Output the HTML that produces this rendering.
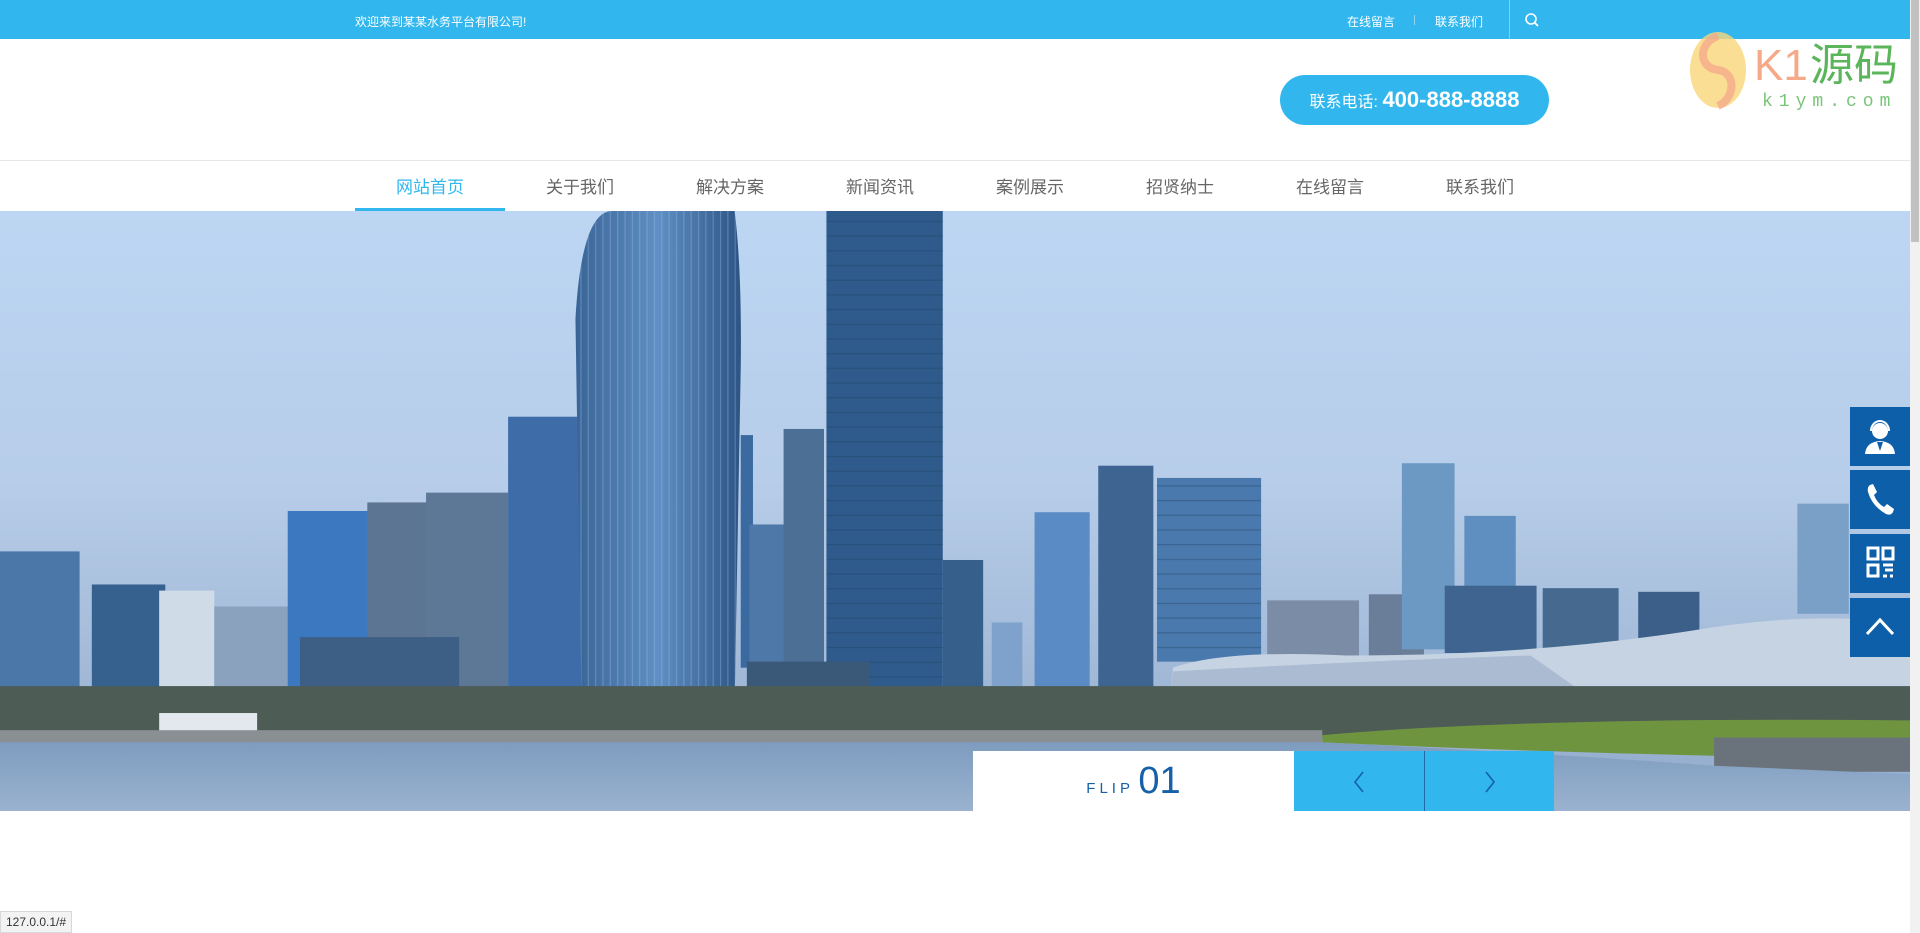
<!DOCTYPE html>
<html><head><meta charset="utf-8">
<style>
*{margin:0;padding:0;box-sizing:border-box}
body{width:1920px;height:933px;overflow:hidden;background:#fff;font-family:"Liberation Sans","Noto Sans CJK SC",sans-serif;position:relative}
.top{position:absolute;left:0;top:0;width:1910px;height:39px;background:#31b7ee;color:#fff;font-size:12px}
.top .w{position:absolute;left:355px;top:13px}
.top .l1{position:absolute;left:1347px;top:13px}
.top .sep{position:absolute;left:1414px;top:15px;width:1px;height:10px;background:#8fd6f5}
.top .l2{position:absolute;left:1435px;top:13px}
.top .vl{position:absolute;left:1509px;top:0;width:1px;height:39px;background:#7fd0f3}
.phone{position:absolute;left:1280px;top:75px;width:269px;height:50px;border-radius:25px;background:#31b7ee;color:#fff;font-size:16px;line-height:50px;text-align:center}
.phone b{font-size:22px}
.hl{position:absolute;left:0;top:160px;width:1910px;height:1px;background:#e6e6e6}
.nav{position:absolute;left:355px;top:161px;height:50px;display:flex}
.nav div{width:150px;text-align:center;font-size:17px;color:#666;line-height:54px;position:relative}
.nav div.a{color:#31b7ee}
.nav div.a:after{content:"";position:absolute;left:0;right:0;bottom:0;height:3px;background:#31b7ee}
.banner{position:absolute;left:0;top:211px;width:1910px;height:600px;overflow:hidden}
.flip{position:absolute;left:973px;top:751px;width:321px;height:60px;background:#fff;color:#1560a8;text-align:center}
.flip span{font-size:15px;letter-spacing:4px}
.flip b{font-weight:normal;font-size:38px;line-height:60px}
.arr{position:absolute;top:751px;height:60px;width:130px;background:#31b7ee}
.side{position:absolute;left:1850px;width:60px;height:59px;background:#0d5fa9}
.sb{position:absolute;left:1910px;top:0;width:10px;height:933px;background:#f1f1f1}
.sb:after{content:"";position:absolute;left:1px;top:0;width:8px;height:242px;background:#c1c1c1}
.st{position:absolute;left:0;top:911px;height:22px;padding:0 5px;background:#f3f3f3;border:1px solid #d8d8d8;font-size:12px;line-height:20px;color:#333}
</style></head><body>
<div class="top"><span class="w">欢迎来到某某水务平台有限公司!</span><span class="l1">在线留言</span><span class="sep"></span><span class="l2">联系我们</span><span class="vl"></span>
<svg style="position:absolute;left:1524px;top:12px" width="16" height="16" viewBox="0 0 16 16"><circle cx="7" cy="7" r="5" fill="none" stroke="#fff" stroke-width="1.6"/><path d="M10.5 10.5L14 14" stroke="#fff" stroke-width="1.8"/></svg></div>
<div class="phone">联系电话: <b>400-888-8888</b></div>
<svg style="position:absolute;left:1688px;top:28px" width="210" height="85" viewBox="0 0 210 85"><ellipse cx="30" cy="42" rx="28" ry="38" fill="#f9d678" opacity=".8"/><path d="M30 8 C10 15 10 40 30 42 C48 44 48 70 30 78" stroke="#f3a48a" stroke-width="8" fill="none" opacity=".7"/><text x="66" y="52" font-size="44" fill="#f6a988" font-family="Liberation Sans,sans-serif">K1</text><text x="122" y="52" font-size="44" fill="#5bb55b" font-family="Noto Sans CJK SC,sans-serif">源码</text><text x="74" y="78" font-size="18" fill="#7ac47a" letter-spacing="6" font-family="Liberation Mono,monospace">k1ym.com</text></svg>
<div class="hl"></div>
<div class="nav"><div class="a">网站首页</div><div>关于我们</div><div>解决方案</div><div>新闻资讯</div><div>案例展示</div><div>招贤纳士</div><div>在线留言</div><div>联系我们</div></div>
<div class="banner">
<svg width="1910" height="600" viewBox="0 172 1560 490" preserveAspectRatio="none">
<defs><linearGradient id="sky" x1="0" y1="0" x2="0" y2="1"><stop offset="0" stop-color="#bcd6f3"/><stop offset=".45" stop-color="#b7cde9"/><stop offset="1" stop-color="#92abcb"/></linearGradient>
<linearGradient id="tw" x1="0" x2="1"><stop offset="0" stop-color="#3a6496"/><stop offset=".5" stop-color="#5f8fc4"/><stop offset="1" stop-color="#2d5484"/></linearGradient>
<pattern id="str" width="6" height="10" patternUnits="userSpaceOnUse"><rect width="1" height="10" fill="#9fc0e6" opacity=".35"/></pattern>
<pattern id="win" width="8" height="12" patternUnits="userSpaceOnUse"><rect width="8" height="1" fill="#1d3b5e" opacity=".35"/></pattern>
<linearGradient id="wt" x1="0" y1="0" x2="0" y2="1"><stop offset="0" stop-color="#7e9cbf"/><stop offset="1" stop-color="#9ab2cf"/></linearGradient></defs>
<rect x="0" y="172" width="1560" height="490" fill="url(#sky)"/>
<g fill="#4a76a8">
<rect x="0" y="450" width="65" height="120"/><rect x="75" y="477" width="60" height="95" fill="#36618f"/><rect x="130" y="482" width="45" height="85" fill="#d0dbe8"/>
<rect x="175" y="495" width="70" height="75" fill="#8aa2bd"/>
<rect x="235" y="417" width="70" height="150" fill="#3c78bf"/>
<rect x="300" y="410" width="55" height="165" fill="#5b7593"/><rect x="348" y="402" width="67" height="173" fill="#5c7896"/>
<rect x="245" y="520" width="130" height="55" fill="#3d5e85"/>
<rect x="415" y="340" width="60" height="235" fill="#3d6ca8"/>
<path d="M475 575 L470 260 Q475 172 500 172 L600 172 Q606 220 605 300 L600 575Z" fill="url(#tw)"/>
<path d="M475 575 L470 260 Q475 172 500 172 L600 172 Q606 220 605 300 L600 575Z" fill="url(#str)"/>
<rect x="605" y="355" width="10" height="190" fill="#3b6aa0"/><rect x="612" y="428" width="30" height="120" fill="#4d78a8"/><rect x="640" y="350" width="33" height="195" fill="#4b6f95"/>
<rect x="675" y="172" width="95" height="403" fill="#2e5b8b"/>
<rect x="675" y="172" width="95" height="403" fill="url(#win)"/>
<rect x="610" y="540" width="100" height="35" fill="#3a5878"/>
<rect x="770" y="457" width="33" height="113" fill="#375f8c"/>
<rect x="810" y="508" width="25" height="62" fill="#7ea2cc"/>
<rect x="845" y="418" width="45" height="152" fill="#5a8bc4"/><rect x="897" y="380" width="45" height="190" fill="#3e6492"/>
<rect x="945" y="390" width="85" height="150" fill="#4a79ad"/>
<rect x="945" y="390" width="85" height="150" fill="url(#win)"/>
<rect x="1035" y="490" width="75" height="50" fill="#7a8ca6"/><rect x="1118" y="485" width="45" height="50" fill="#6a7e99"/>
<rect x="1145" y="378" width="43" height="152" fill="#6c98c4"/><rect x="1196" y="421" width="42" height="60" fill="#5f8fc0"/>
<rect x="1180" y="478" width="75" height="55" fill="#3f6490"/><rect x="1260" y="480" width="62" height="50" fill="#45698f"/><rect x="1338" y="483" width="50" height="45" fill="#3c5f89"/>
<rect x="1468" y="411" width="42" height="90" fill="#7aa0c8"/>
</g>
<path d="M955 570 L958 545 Q1000 530 1100 535 Q1250 535 1380 515 Q1450 503 1510 505 L1560 510 L1560 570Z" fill="#c6d3e3"/>
<path d="M955 570 L958 548 Q1100 540 1250 535 L1300 570Z" fill="#8fa4c0" opacity=".5"/>
<rect x="0" y="560" width="1560" height="42" fill="#4d5c55"/>
<rect x="130" y="582" width="80" height="18" fill="#e3e8ee"/>
<path d="M1080 600 Q1250 585 1560 588 L1560 620 Q1300 616 1080 606Z" fill="#6f9440"/>
<rect x="0" y="596" width="1080" height="10" fill="#8a8f94"/>
<rect x="1400" y="602" width="160" height="28" fill="#6a737c"/>
<path d="M0 606 L1080 606 Q1250 614 1400 625 L1560 632 L1560 662 L0 662Z" fill="url(#wt)"/>
</svg></div>
<div class="flip"><span>FLIP</span> <b>01</b></div>
<div class="arr" style="left:1294px"><svg style="position:absolute;left:58px;top:20px" width="14" height="22" viewBox="0 0 14 22"><path d="M11 1L3 11L11 21" stroke="#1560a8" stroke-width="1.6" fill="none"/></svg></div>
<div class="arr" style="left:1425px;width:129px"><svg style="position:absolute;left:58px;top:20px" width="14" height="22" viewBox="0 0 14 22"><path d="M3 1L11 11L3 21" stroke="#1560a8" stroke-width="1.6" fill="none"/></svg></div>
<div style="position:absolute;left:1424px;top:751px;width:1px;height:60px;background:#1c6aa8"></div>
<div class="side" style="top:407px"><svg width="60" height="59" viewBox="0 0 60 59"><circle cx="30" cy="24" r="8" fill="#fff"/><path d="M21 24a9 10 0 0 1 18 0" stroke="#fff" stroke-width="2" fill="none"/><path d="M15 47 Q16 35 30 34 Q44 35 45 47Z" fill="#fff"/><path d="M27 35 L30 44 L33 35Z" fill="#0d5fa9"/></svg></div>
<div class="side" style="top:470px"><svg width="60" height="59" viewBox="0 0 60 59"><path d="M20 15 Q17 17 18 22 Q22 36 36 44 Q41 46 43 42 L44 39 L37 34 L34 37 Q27 33 24 25 L27 22 L23 14Z" fill="#fff"/></svg></div>
<div class="side" style="top:534px"><svg width="60" height="59" viewBox="0 0 60 59" fill="none" stroke="#fff" stroke-width="3"><rect x="18" y="14" width="10" height="11"/><rect x="33" y="14" width="10" height="11"/><rect x="18" y="31" width="10" height="11"/><path d="M33 31h10M35 36h8M33 42h4M40 42h3"/></svg></div>
<div class="side" style="top:598px"><svg width="60" height="59" viewBox="0 0 60 59"><path d="M17 36 L30 22 L43 36" stroke="#fff" stroke-width="3" fill="none"/></svg></div>
<div class="sb"></div>
<div class="st">127.0.0.1/#</div>
</body></html>
